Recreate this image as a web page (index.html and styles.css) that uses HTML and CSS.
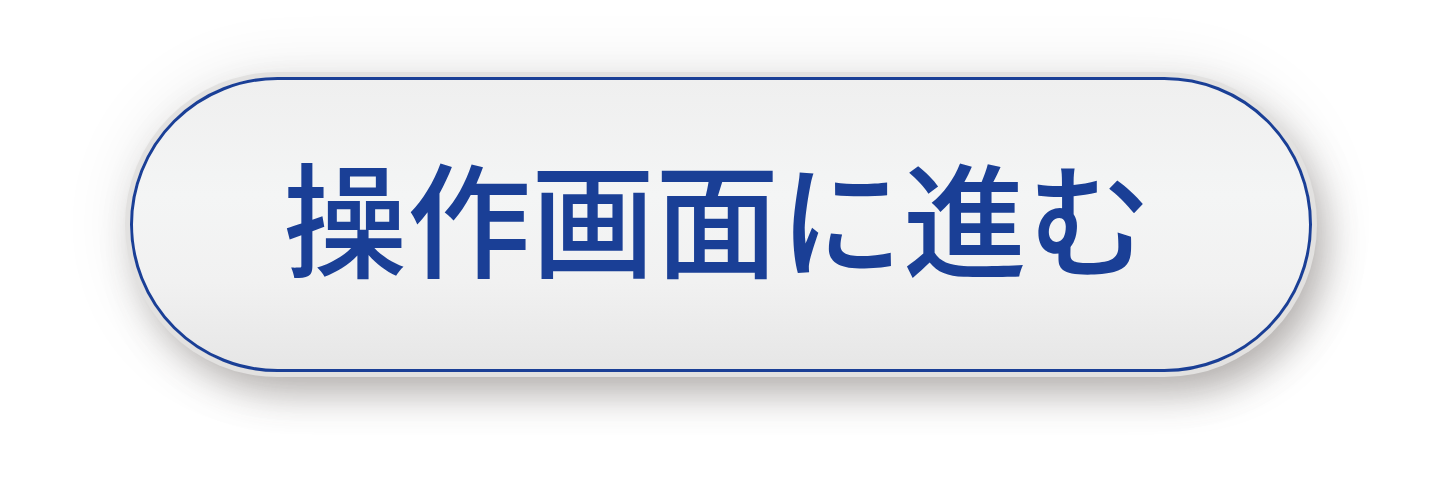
FILE: index.html
```html
<!DOCTYPE html>
<html lang="ja">
<head>
<meta charset="utf-8">
<link rel="stylesheet" href="styles.css">
</head>
<body>
<div class="stage">
  <button class="go-btn" type="button"><span class="label">操作画面に進む</span></button>
</div>
</body>
</html>
```
FILE: styles.css
```css
html, body {
  margin: 0;
  padding: 0;
  background: #ffffff;
}
.stage {
  width: 1452px;
  height: 496px;
  display: flex;
  align-items: flex-start;
  padding: 77px 0 0 130px;
  box-sizing: border-box;
}
.go-btn {
  width: 1182px;
  height: 295px;
  box-sizing: border-box;
  border: 3px solid #1a3f96;
  border-radius: 148px;
  background: linear-gradient(to bottom, #efefef 0%, #f4f5f5 40%, #f1f1f1 70%, #e6e6e6 100%);
  box-shadow:
    0 0 0 5px #e2e1e0,
    12px 20px 38px rgba(70, 60, 55, 0.38),
    0 0 70px rgba(0, 0, 0, 0.10);
  display: flex;
  align-items: center;
  justify-content: center;
  padding: 0 0 22px 0;
  cursor: pointer;
}
.label {
  font-family: "Noto Sans CJK JP", "Noto Sans", sans-serif;
  font-weight: 500;
  font-size: 124px;
  line-height: 1;
  color: #1a3f96;
  margin-right: 8px;
}
```
